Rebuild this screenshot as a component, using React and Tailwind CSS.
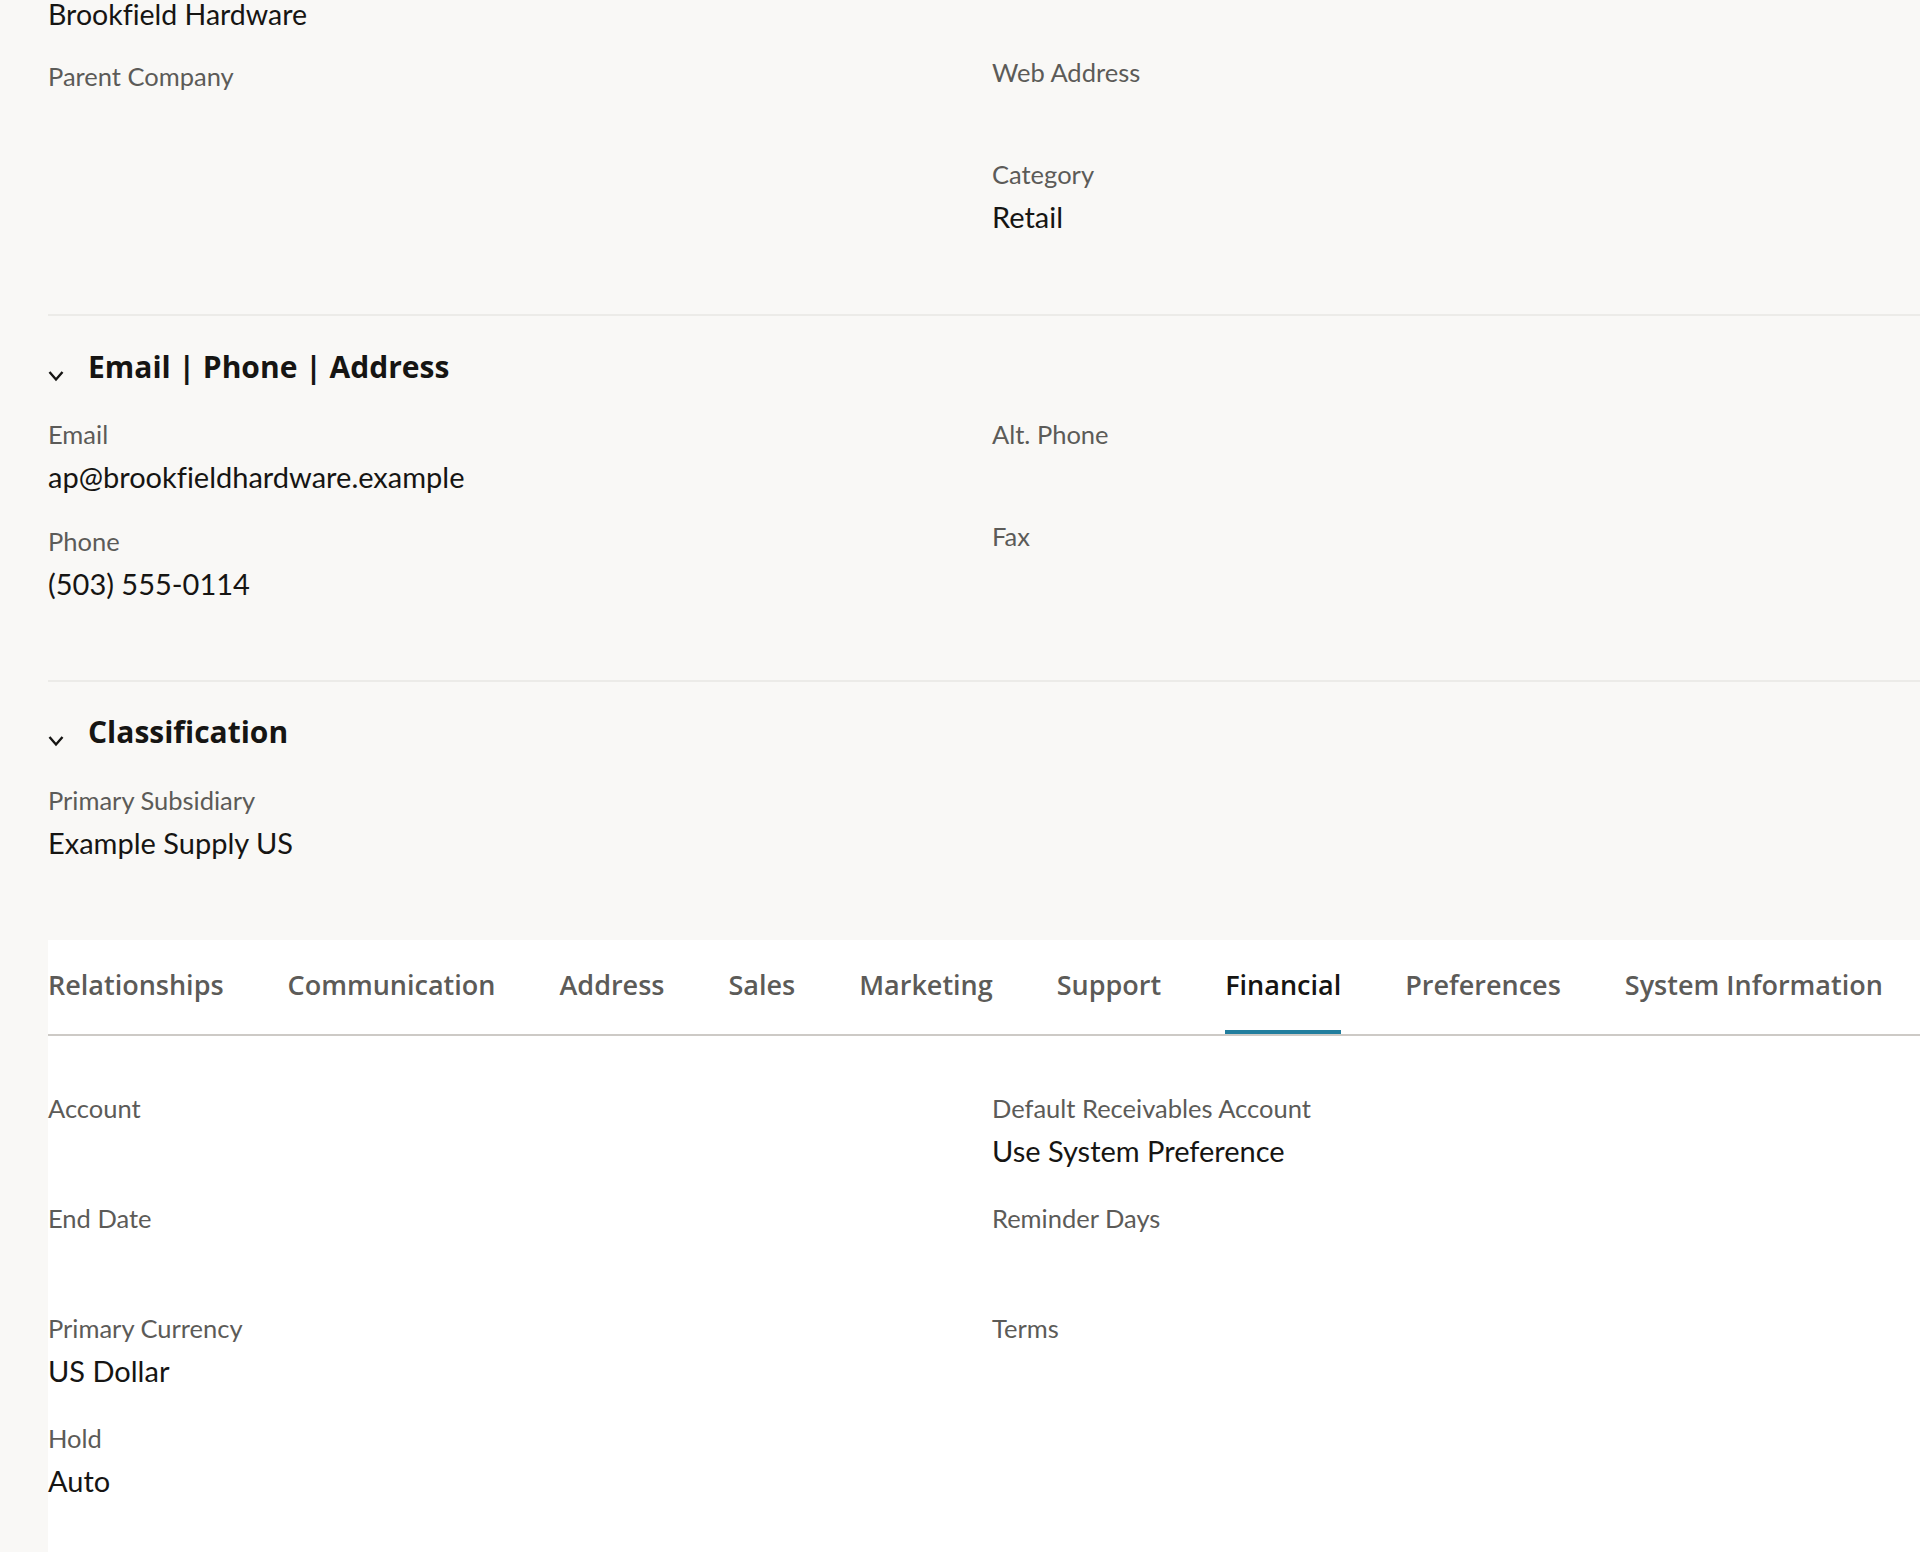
import React from "react";

const LABEL = "text-[25.5px] leading-[30px] text-[#5c5b58]";
const VALUE = "text-[29px] leading-[36px] text-[#161513] mt-[10px]";

function Field({ label, value, h }) {
  return (
    <div className={h}>
      <div className={LABEL}>{label}</div>
      {value ? <div className={VALUE}>{value}</div> : null}
    </div>
  );
}

function Header({ title }) {
  return (
    <div className="flex items-start h-[40px]">
      <svg className="mt-[23px] shrink-0" width="16" height="12" viewBox="0 0 16 12" fill="none">
        <path d="M1.5 2 L8 9.5 L14.5 2" stroke="#161513" strokeWidth="2.4" />
      </svg>
      <h2 className="ml-[24px] font-['Open_Sans',sans-serif] text-[30px] font-bold leading-[40px] text-[#161513]">
        {title}
      </h2>
    </div>
  );
}

const TABS = [
  "Relationships",
  "Communication",
  "Address",
  "Sales",
  "Marketing",
  "Support",
  "Financial",
  "Preferences",
  "System Information",
];

export default function App() {
  return (
    <div className="h-[1552px] overflow-hidden bg-[#f9f8f6] pl-12 flex flex-col font-['Lato',sans-serif] [font-variant-ligatures:none]">
      <section className="border-b-2 border-[#ecebe8] pb-[79px]">
        <div className="grid grid-cols-2 gap-x-4">
          <div>
            <div className="text-[28.5px] leading-[30px] -mt-[1px] text-[#161513]">Brookfield Hardware</div>
            <div className={"mt-[32px] " + LABEL}>Parent Company</div>
          </div>
          <div className="pt-[57px]">
            <Field h="h-[102px]" label="Web Address" />
            <Field label="Category" value="Retail" />
          </div>
        </div>
      </section>

      <section className="border-b-2 border-[#ecebe8] pt-[31px] pb-[78px]">
        <Header title="Email | Phone | Address" />
        <div className="grid grid-cols-2 gap-x-4 mt-[32px]">
          <div>
            <Field h="h-[107px]" label="Email" value="ap@brookfieldhardware.example" />
            <Field label="Phone" value="(503) 555-0114" />
          </div>
          <div>
            <Field h="h-[102px]" label="Alt. Phone" />
            <Field label="Fax" />
          </div>
        </div>
      </section>

      <section className="pt-[30px]">
        <Header title="Classification" />
        <div className="mt-[33px]">
          <Field label="Primary Subsidiary" value="Example Supply US" />
        </div>
      </section>

      <div className="mt-[79px] flex-1 bg-white">
        <div className="flex gap-[64px] border-b-2 border-[#cdcac6]">
          {TABS.map((t) => (
            <div
              key={t}
              className={
                t === "Financial"
                  ? "h-[94px] flex items-center border-b-4 border-[#227e9e] font-['Open_Sans',sans-serif] text-[27px] font-semibold text-[#161513] whitespace-nowrap"
                  : "h-[94px] flex items-center border-b-4 border-transparent font-['Open_Sans',sans-serif] text-[27px] font-semibold text-[#5c5b58] whitespace-nowrap"
              }
            >
              {t}
            </div>
          ))}
        </div>
        <div className="grid grid-cols-2 gap-x-4 mt-[57px]">
          <div>
            <Field h="h-[110px]" label="Account" />
            <Field h="h-[110px]" label="End Date" />
            <Field h="h-[110px]" label="Primary Currency" value="US Dollar" />
            <Field label="Hold" value="Auto" />
          </div>
          <div>
            <Field h="h-[110px]" label="Default Receivables Account" value="Use System Preference" />
            <Field h="h-[110px]" label="Reminder Days" />
            <Field label="Terms" />
          </div>
        </div>
      </div>
    </div>
  );
}
